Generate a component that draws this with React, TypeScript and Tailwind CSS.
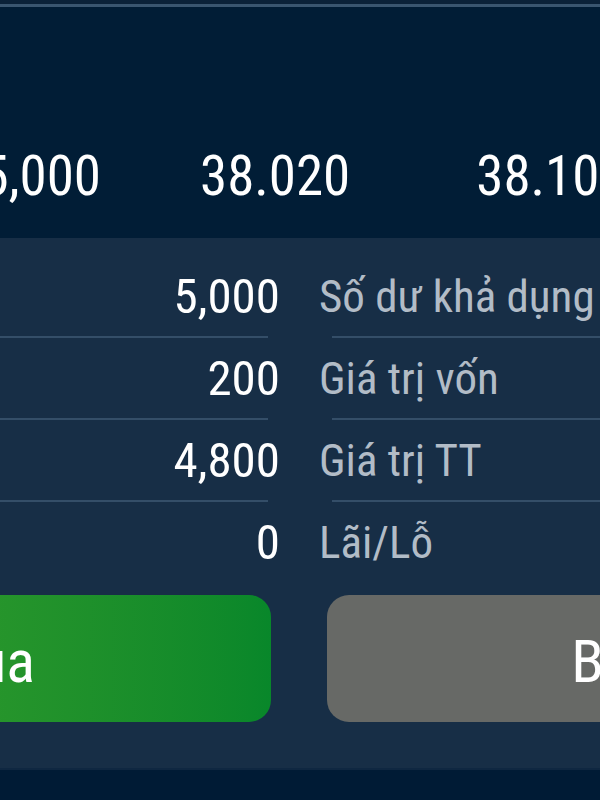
import React from 'react';

const font = { fontFamily: '"Roboto Condensed", Roboto, sans-serif' };

const rows = [
  { value: '5,000', label: 'Số dư khả dụng' },
  { value: '200', label: 'Giá trị vốn' },
  { value: '4,800', label: 'Giá trị TT' },
  { value: '0', label: 'Lãi/Lỗ' },
];

function Divider() {
  return (
    <div className="flex h-[2px]">
      <div className="w-[590px] pr-[32px]">
        <div className="h-full bg-[#344e68]" />
      </div>
      <div className="w-[590px] pl-[32px]">
        <div className="h-full bg-[#344e68]" />
      </div>
    </div>
  );
}

export default function App() {
  return (
    <div className="w-[600px] h-[800px] overflow-hidden bg-[#011d36] text-white" style={font}>
      <div className="w-[1180px] -ml-[290px] flex flex-col h-full">
        {/* top edge */}
        <div className="h-[4px] bg-[#0b2239]" />
        <div className="h-[3px] bg-[#3a5670]" />

        {/* prices */}
        <div className="h-[231px] bg-[#011d36] pt-[142px]">
          <div className="flex text-[55px] leading-none">
            <span className="w-[391px] text-right">5,000</span>
            <span className="ml-[99px]">38.020</span>
            <span className="ml-[126px]">38.100</span>
          </div>
        </div>

        {/* account summary */}
        <div className="bg-[#172e46] pt-[18px] pb-[46px]">
          {rows.map((r, i) => (
            <div key={r.label}>
              <div className="flex h-[80px] items-center">
                <div className="w-[590px] pr-[20px] text-right text-[49px] leading-none">
                  {r.value}
                </div>
                <div className="w-[590px] pl-[19px] text-[45px] leading-none text-[#b2bcc7] whitespace-nowrap">
                  {r.label}
                </div>
              </div>
              {i < rows.length - 1 && <Divider />}
            </div>
          ))}

          <div className="flex gap-[56px] mt-[13px]">
            <button className="flex-1 h-[127px] rounded-[22px] bg-gradient-to-r from-[#3aa32c] to-[#08872a] pr-[14px] pt-[6px] text-[60px] leading-none text-white">
              Mua
            </button>
            <button className="flex-1 h-[127px] rounded-[22px] bg-[#676966] pl-[16px] pt-[6px] text-[60px] leading-none text-white">
              Bán
            </button>
          </div>
        </div>

        {/* bottom bar */}
        <div className="flex-1 bg-[#001b35] border-t-2 border-[#0f2741]" />
      </div>
    </div>
  );
}
